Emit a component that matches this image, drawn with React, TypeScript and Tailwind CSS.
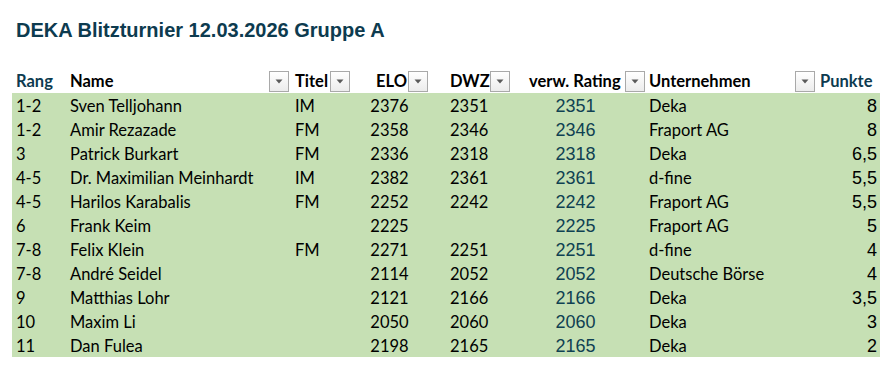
import React from 'react'

type Row = {
  rang: string
  name: string
  titel: string
  elo: string
  dwz: string
  rating: string
  firma: string
  punkte: string
}

const rows: Row[] = [
  { rang: '1-2', name: 'Sven Telljohann', titel: 'IM', elo: '2376', dwz: '2351', rating: '2351', firma: 'Deka', punkte: '8' },
  { rang: '1-2', name: 'Amir Rezazade', titel: 'FM', elo: '2358', dwz: '2346', rating: '2346', firma: 'Fraport AG', punkte: '8' },
  { rang: '3', name: 'Patrick Burkart', titel: 'FM', elo: '2336', dwz: '2318', rating: '2318', firma: 'Deka', punkte: '6,5' },
  { rang: '4-5', name: 'Dr. Maximilian Meinhardt', titel: 'IM', elo: '2382', dwz: '2361', rating: '2361', firma: 'd-fine', punkte: '5,5' },
  { rang: '4-5', name: 'Harilos Karabalis', titel: 'FM', elo: '2252', dwz: '2242', rating: '2242', firma: 'Fraport AG', punkte: '5,5' },
  { rang: '6', name: 'Frank Keim', titel: '', elo: '2225', dwz: '', rating: '2225', firma: 'Fraport AG', punkte: '5' },
  { rang: '7-8', name: 'Felix Klein', titel: 'FM', elo: '2271', dwz: '2251', rating: '2251', firma: 'd-fine', punkte: '4' },
  { rang: '7-8', name: 'André Seidel', titel: '', elo: '2114', dwz: '2052', rating: '2052', firma: 'Deutsche Börse', punkte: '4' },
  { rang: '9', name: 'Matthias Lohr', titel: '', elo: '2121', dwz: '2166', rating: '2166', firma: 'Deka', punkte: '3,5' },
  { rang: '10', name: 'Maxim Li', titel: '', elo: '2050', dwz: '2060', rating: '2060', firma: 'Deka', punkte: '3' },
  { rang: '11', name: 'Dan Fulea', titel: '', elo: '2198', dwz: '2165', rating: '2165', firma: 'Deka', punkte: '2' },
]

const cols = 'grid grid-cols-[54px_224px_61px_77px_78px_139px_170px_65px]'

function FilterButton() {
  return (
    <div className="w-[20px] h-[21px] shrink-0 border border-[#a9a9a9] bg-gradient-to-b from-white to-[#ececec] flex items-center justify-center">
      <svg width="8" height="5" viewBox="0 0 8 5">
        <path d="M0.5 0.5 L7.5 0.5 L4 4.5 Z" fill="#5a5a5a" />
      </svg>
    </div>
  )
}

export default function App() {
  return (
    <div className="w-[893px] h-[370px] bg-white font-['Lato','Noto_Sans',sans-serif] text-black">
      {/* Title */}
      <div className="h-[69px] pl-[16px] pt-[18px]">
        <h1 className="font-['Liberation_Sans',Arial,sans-serif] font-bold text-[20px] leading-[24px] text-[#0d3b4f]">
          DEKA Blitzturnier 12.03.2026 Gruppe A
        </h1>
      </div>

      <div className="ml-[12px] w-[868px]">
        {/* Header */}
        <div className={`${cols} h-[24px] items-center text-[16.5px] font-bold`}>
          <div className="pl-[4px] text-[#0d3b4f]">Rang</div>
          <div className="pl-[4px] flex items-center pr-[1px]">
            <span>Name</span>
            <span className="ml-auto"><FilterButton /></span>
          </div>
          <div className="pl-[5px] flex items-center pr-[1px]">
            <span>Titel</span>
            <span className="ml-auto"><FilterButton /></span>
          </div>
          <div className="pl-[25px] flex items-center">
            <span>ELO</span>
            <span className="ml-auto"><FilterButton /></span>
          </div>
          <div className="pl-[22px] flex items-center">
            <span className="whitespace-nowrap">DWZ</span>
            <span className="ml-auto"><FilterButton /></span>
          </div>
          <div className="pl-[23px] flex items-center">
            <span className="whitespace-nowrap">verw. Rating</span>
            <span className="ml-auto"><FilterButton /></span>
          </div>
          <div className="pl-[4px] flex items-center">
            <span>Unternehmen</span>
            <span className="ml-auto"><FilterButton /></span>
          </div>
          <div className="pl-[5px] text-[#0d3b4f]">Punkte</div>
        </div>

        {/* Body */}
        <div className="bg-[#c6e0b4]">
          {rows.map((r, i) => (
            <div key={i} className={`${cols} h-[24px] items-center text-[16.5px]`}>
              <div className="pl-[4px]">{r.rang}</div>
              <div className="pl-[4px]">{r.name}</div>
              <div className="pl-[5px]">{r.titel}</div>
              <div className="text-center">{r.elo}</div>
              <div className="pl-[22px]">{r.dwz}</div>
              <div className="text-center font-['Liberation_Sans',Arial,sans-serif] text-[18px] text-[#0f4152]">
                {r.rating}
              </div>
              <div className="pl-[4px]">{r.firma}</div>
              <div className="text-right pr-[3px] font-['Liberation_Sans',Arial,sans-serif] text-[18px]">
                {r.punkte}
              </div>
            </div>
          ))}
        </div>
      </div>
    </div>
  )
}
